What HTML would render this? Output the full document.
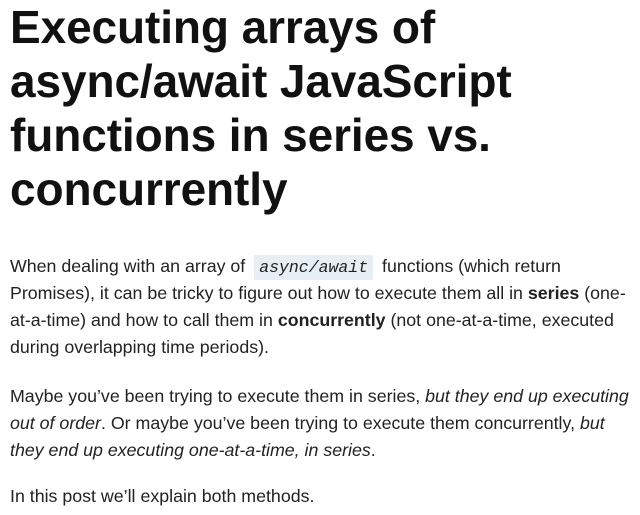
<!DOCTYPE html>
<html><head><meta charset="utf-8"><style>
body{margin:0;background:#fff;color:#111;width:640px;height:515px;overflow:hidden}
h1{position:absolute;left:10px;top:0;margin:0;font:bold 46px/54px "Liberation Sans",sans-serif;letter-spacing:-0.1px;color:#111;white-space:nowrap}
.p{position:absolute;left:10px;margin:0;font:17.8px/27px "Liberation Sans",sans-serif;color:#222;white-space:nowrap;letter-spacing:0}
code{font:italic 16.5px "Liberation Mono",monospace;background:#e8eff4;padding:3px 5px;margin:0 4px}
</style></head><body>
<h1>Executing arrays of<br>async/await JavaScript<br>functions in series vs.<br>concurrently</h1>
<p class="p" style="top:253px">When dealing with an array of <code>async/await</code> functions (which return<br>Promises), it can be tricky to figure out how to execute them all in <b>series</b> (one-<br>at-a-time) and how to call them in <b>concurrently</b> (not one-at-a-time, executed<br>during overlapping time periods).</p>
<p class="p" style="top:383px">Maybe you’ve been trying to execute them in series, <i>but they end up executing</i><br><i>out of order</i>. Or maybe you’ve been trying to execute them concurrently, <i>but</i><br><i>they end up executing one-at-a-time, in series</i>.</p>
<p class="p" style="top:483px">In this post we’ll explain both methods.</p>
</body></html>
